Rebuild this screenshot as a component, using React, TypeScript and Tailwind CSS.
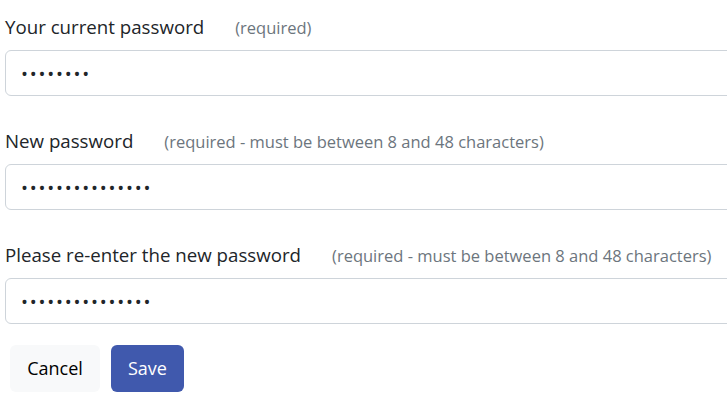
import React from "react";

const fields = [
  { label: "Your current password", hint: "(required)", value: "12345678" },
  { label: "New password", hint: "(required - must be between 8 and 48 characters)", value: "123456789012345" },
  { label: "Please re-enter the new password", hint: "(required - must be between 8 and 48 characters)", value: "123456789012345" },
];

export default function App() {
  return (
    <div className="w-[727px] h-[410px] overflow-hidden bg-white pl-[5px] pt-[13px]" style={{ fontFamily: '"Open Sans", "Noto Sans", sans-serif' }}>
      <div className="flex flex-col gap-[31px]">
        {fields.map((f) => (
          <div key={f.label}>
            <div className="flex items-baseline h-[26px] mb-[11px] whitespace-nowrap">
              <span className="text-[18.7px] text-[#212529] mr-[31px]">{f.label}</span>
              <span className="text-[16.5px] text-[#6c757d]">{f.hint}</span>
            </div>
            <input
              type="password"
              readOnly
              value={f.value}
              className="block w-[740px] h-[46px] rounded-[6px] border border-[#ced4da] px-[15px] text-[18.5px] tracking-[1.8px] text-[#212529] outline-none"
            />
          </div>
        ))}
      </div>
      <div className="flex gap-[11px] pl-[5px] mt-[21px]">
        <button className="h-[47px] w-[90px] rounded-[6px] bg-[#f8f9fa] text-[18px] text-black">Cancel</button>
        <button className="h-[47px] w-[73px] rounded-[6px] bg-[#4059ad] text-[18px] text-white">Save</button>
      </div>
    </div>
  );
}
